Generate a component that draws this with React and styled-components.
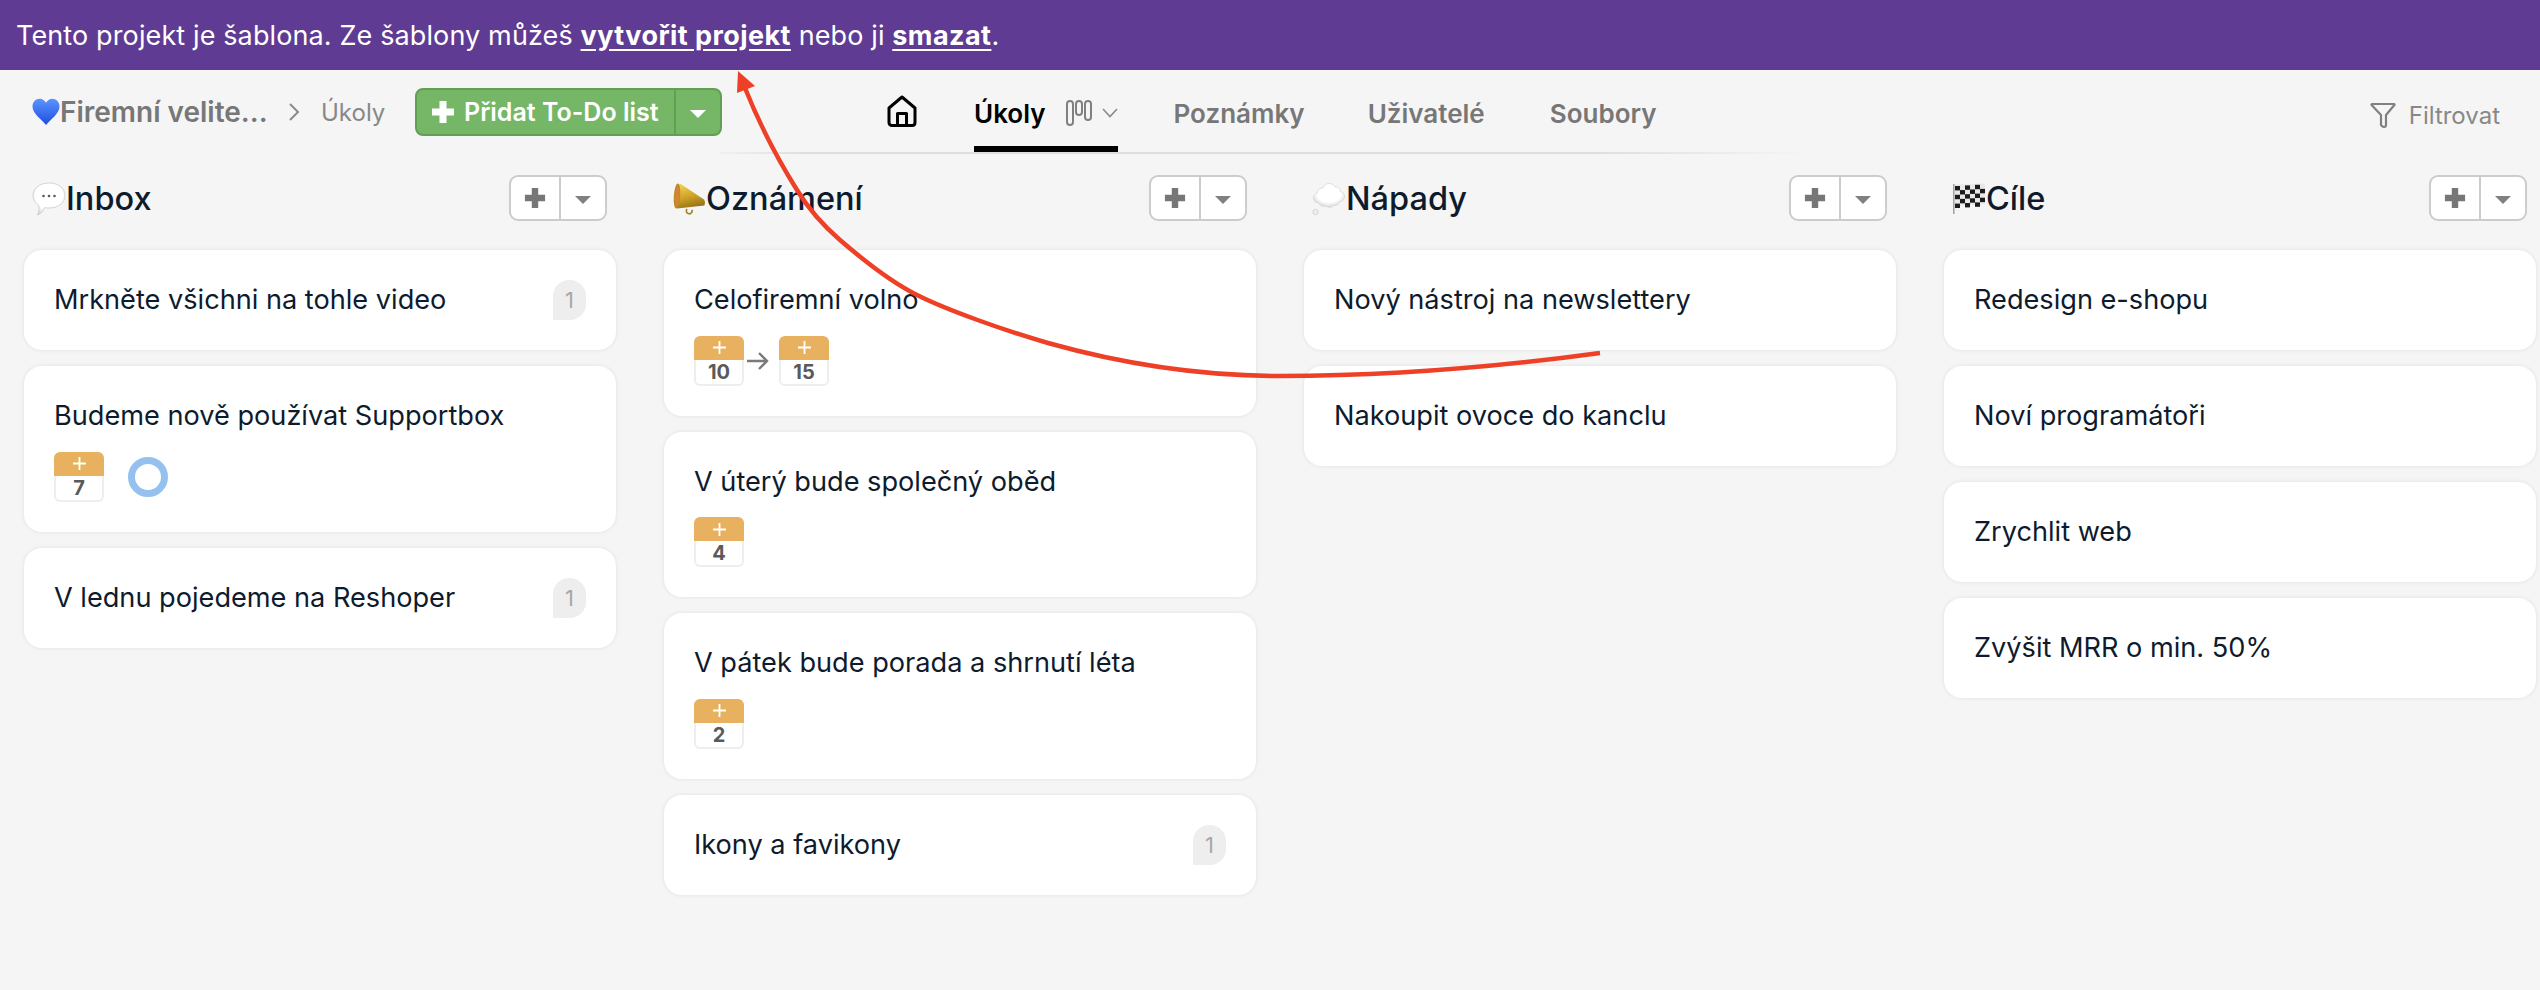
import React from "react";
import styled, { createGlobalStyle } from "styled-components";

const Global = createGlobalStyle`
  html, body {
    margin: 0;
    padding: 0;
    height: 100%;
    background: #f5f5f5;
    overflow: hidden;
  }
  body {
    font-family: "Inter", "Liberation Sans", sans-serif;
    color: #0e1b2d;
  }
`;

const Page = styled.div`
  position: relative;
  width: 2540px;
  height: 990px;
  overflow: hidden;
  background: #f5f5f5;
`;

const Banner = styled.div`
  height: 70px;
  display: flex;
  align-items: center;
  padding-left: 16px;
  background: #5f3b93;
  color: #ffffff;
  font-size: 27px;
  letter-spacing: 0.12px;
`;

const BannerLink = styled.a`
  font-weight: 700;
  color: #ffffff;
  letter-spacing: 0.44px;
  text-decoration: underline;
  text-underline-offset: 4px;
`;

const Header = styled.div`
  position: relative;
  height: 84px;
  display: flex;
  align-items: stretch;
  padding: 0 40px 0 32px;

  &::after {
    content: "";
    position: absolute;
    left: 720px;
    top: 82px;
    width: 1090px;
    height: 2px;
    background: linear-gradient(90deg, #f0f0f0 0, #dedede 8%, #dedede 80%, #f5f5f5 100%);
  }
`;

const Crumbs = styled.div`
  display: flex;
  align-items: center;
  height: 84px;
`;

const Project = styled.span`
  font-size: 28px;
  font-weight: 600;
  color: #777777;
  width: 205px;
  white-space: nowrap;
`;

const CrumbArrow = styled.svg`
  width: 14px;
  height: 20px;
  margin: 0 20px 0 22px;
  fill: none;
  stroke: #8a8a8a;
  stroke-width: 2;
`;

const CrumbPage = styled.span`
  font-size: 24px;
  color: #888888;
  width: 62px;
`;

const AddGroup = styled.div`
  display: flex;
  align-items: stretch;
  height: 48px;
  margin-left: 32px;
  background: #75b667;
  border: 2px solid #629f55;
  border-radius: 8px;
  box-sizing: border-box;
  color: #ffffff;
`;

const AddMain = styled.div`
  display: flex;
  align-items: center;
  gap: 9px;
  width: 259px;
  box-sizing: border-box;
  padding-left: 14px;
  border-right: 2px solid #629f55;
  font-size: 25px;
  font-weight: 600;
  white-space: nowrap;
`;

const AddCaret = styled.div`
  width: 44px;
  display: flex;
  align-items: center;
  justify-content: center;
`;

const Caret = styled.span`
  display: block;
  width: 0;
  height: 0;
  border-left: ${(p) => p.$size}px solid transparent;
  border-right: ${(p) => p.$size}px solid transparent;
  border-top: ${(p) => p.$size}px solid ${(p) => p.$color};
  margin-top: 3px;
`;

const Nav = styled.nav`
  display: flex;
  align-items: stretch;
  margin-left: 165px;
  height: 82px;
`;

const HomeLink = styled.div`
  display: flex;
  align-items: center;
  width: 87px;
`;

const Tab = styled.div`
  display: flex;
  align-items: center;
  box-sizing: border-box;
  height: 82px;
  padding-top: 10px;
  margin-right: ${(p) => p.$gap}px;
  font-size: 26px;
  font-weight: 600;
  color: ${(p) => (p.$active ? "#000000" : "#777777")};
  border-bottom: 6px solid ${(p) => (p.$active ? "#000000" : "transparent")};
`;

const TabIcons = styled.span`
  display: flex;
  align-items: center;
  gap: 10px;
  margin-left: 20px;
`;

const Filter = styled.div`
  margin-left: auto;
  display: flex;
  align-items: center;
  gap: 13px;
  height: 82px;
  padding-top: 8px;
  box-sizing: border-box;
  font-size: 24px;
  color: #888888;
`;

const Board = styled.div`
  display: grid;
  grid-template-columns: repeat(4, 592px);
  column-gap: 48px;
  padding: 21px 0 0 24px;
`;

const Column = styled.section`
  display: flex;
  flex-direction: column;
  gap: 16px;
`;

const ColumnHead = styled.div`
  display: flex;
  align-items: center;
  justify-content: space-between;
  height: 46px;
  margin-bottom: 13px;
  padding: 0 9px 0 8px;
`;

const ColumnTitle = styled.h2`
  display: flex;
  align-items: center;
  margin: 0;
  font-size: 32.5px;
  font-weight: 500;
  line-height: 46px;
  padding-top: 2px;
  color: #0e1b2d;
`;

const HeadButtons = styled.div`
  display: flex;
  align-items: stretch;
  height: 46px;
  background: #ffffff;
  border: 2px solid #cccccc;
  border-radius: 9px;
  box-sizing: border-box;
`;

const HeadPlus = styled.div`
  width: 48px;
  display: flex;
  align-items: center;
  justify-content: center;
  border-right: 2px solid #cccccc;
`;

const HeadCaret = styled.div`
  width: 44px;
  display: flex;
  align-items: center;
  justify-content: center;
`;

const Card = styled.article`
  position: relative;
  box-sizing: border-box;
  padding: 30px;
  background: #ffffff;
  border-radius: 18px;
  box-shadow: 0 0 4px rgba(0, 0, 0, 0.09);
`;

const CardTitle = styled.div`
  font-size: 27.15px;
  line-height: 40px;
  color: #0e1b2d;
  white-space: nowrap;
`;

const Comments = styled.span`
  position: absolute;
  right: 30px;
  top: 30px;
  width: 33px;
  height: 40px;
  display: flex;
  align-items: center;
  justify-content: center;
  background: #eeeeee;
  border-radius: 16px 16px 16px 0;
  font-size: 22px;
  color: #a8a8a8;
`;

const Meta = styled.div`
  display: flex;
  align-items: center;
  margin-top: 15.5px;
  height: 50px;
`;

const Cal = styled.div`
  width: 50px;
  height: 50px;
  display: flex;
  flex-direction: column;
  flex: none;
`;

const CalTop = styled.div`
  height: 24px;
  display: flex;
  align-items: center;
  justify-content: center;
  background: #e7b160;
  border-radius: 6px 6px 0 0;
`;

const CalNum = styled.div`
  flex: 1;
  display: flex;
  align-items: center;
  justify-content: center;
  background: #ffffff;
  border: 2px solid #eeeeee;
  border-top: 0;
  border-radius: 0 0 6px 6px;
  font-size: 20px;
  font-weight: 700;
  color: #5a5a5a;
`;

const CalArrow = styled.svg`
  width: 35px;
  height: 24px;
  flex: none;
  fill: none;
  stroke: #7a7a7a;
  stroke-width: 2.4;
`;

const Ring = styled.span`
  display: block;
  box-sizing: border-box;
  width: 40px;
  height: 40px;
  margin-left: 24px;
  border: 7px solid #95c1ef;
  border-radius: 50%;
`;

const Overlay = styled.svg`
  position: absolute;
  left: 0;
  top: 0;
  width: 2540px;
  height: 990px;
  pointer-events: none;
`;

const Heart = () => (
  <svg width="28" height="28" viewBox="0 0 28 28" style={{ flex: "none" }}>
    <defs>
      <linearGradient id="heartFill" x1="0" y1="0" x2="0" y2="1">
        <stop offset="0" stopColor="#5c93ff" />
        <stop offset="1" stopColor="#1d4fe0" />
      </linearGradient>
    </defs>
    <path
      d="M14 27C9 21 .5 15.500 .5 8.500 .5 3.800 4 .8 7.500 .8c3 0 5.300 1.700 6.500 4 1.200-2.300 3.500-4 6.500-4 3.500 0 7 3 7 7.700C27.500 15.500 19 21 14 27z"
      fill="url(#heartFill)"
    />
  </svg>
);

const SpeechEmoji = () => (
  <svg width="34" height="34" viewBox="0 0 34 34" style={{ flex: "none" }}>
    <defs>
      <radialGradient id="bubbleFill" cx="0.5" cy="0.4" r="0.7">
        <stop offset="0.6" stopColor="#ffffff" />
        <stop offset="1" stopColor="#c9c9c9" />
      </radialGradient>
    </defs>
    <path
      d="M17 1c9 0 16 5 16 12.500S26 26 17 26c-1.500 0-3-.1-4.300-.4C11.500 28.500 9 32 5.500 33c1.300-2.500 1.700-6 1.500-9.500C3 21 1 17.500 1 13.500 1 6 8 1 17 1z"
      fill="url(#bubbleFill)"
      stroke="#c4c4c4"
      strokeWidth="0.7"
    />
    <circle cx="11.500" cy="14" r="1.300" fill="#5a5a5a" />
    <circle cx="17" cy="14" r="1.300" fill="#5a5a5a" />
    <circle cx="22.500" cy="14" r="1.300" fill="#5a5a5a" />
  </svg>
);

const MegaphoneEmoji = () => (
  <svg width="34" height="34" viewBox="0 0 34 34" style={{ flex: "none" }}>
    <defs>
      <linearGradient id="hornFill" x1="0.2" y1="0" x2="0.5" y2="1">
        <stop offset="0" stopColor="#f4d35e" />
        <stop offset="0.55" stopColor="#cfa325" />
        <stop offset="1" stopColor="#96701a" />
      </linearGradient>
    </defs>
    <path
      d="M15 27c-1.500 2-.5 4.500 1.800 4.800 2.200.3 3.800-1.600 3.200-4"
      fill="none"
      stroke="#a67f1a"
      strokeWidth="1.600"
    />
    <path d="M8 1.500 32 17.500c1.200 1 1.200 4.500.3 6L5 26.500C2 22 3 6 8 1.500z" fill="url(#hornFill)" />
    <ellipse cx="5" cy="14" rx="3.200" ry="12.500" fill="#c08a22" transform="rotate(4 5 14)" />
    <ellipse cx="5" cy="14" rx="1.800" ry="10" fill="#d9803a" transform="rotate(4 5 14)" />
  </svg>
);

const CloudEmoji = () => (
  <svg width="34" height="34" viewBox="0 0 34 34" style={{ flex: "none" }}>
    <defs>
      <radialGradient id="cloudFill" cx="0.5" cy="0.4" r="0.65">
        <stop offset="0.6" stopColor="#ffffff" />
        <stop offset="1" stopColor="#cfcfcf" />
      </radialGradient>
    </defs>
    <path
      d="M17 1.500c3 0 5 1.500 6 3.500 3-.5 5.500 1.500 5.500 4.500 3 1 4.500 3.500 4 6-.5 2.500-2.500 4-5 4-.5 3-3 4.500-6 4-1.500 2-5 2.500-7.500.5-3 1-6 0-7-3-3 0-5.500-2-5.500-5 0-2.500 1.500-4.500 4-5 0-3 2.500-5.500 5.500-5C12 3 14.500 1.500 17 1.500z"
      fill="url(#cloudFill)"
      stroke="#cfcfcf"
      strokeWidth="0.6"
    />
    <circle cx="3.500" cy="30" r="2.700" fill="#eeeeee" stroke="#c4c4c4" strokeWidth="0.6" />
  </svg>
);

const flagCells = [];
for (let row = 0; row < 5; row++) {
  for (let col = 0; col < 6; col++) {
    if ((row + col) % 2 === 0) {
      flagCells.push({ x: 3 + col * 5, y: 4 + row * 4.4 - col * 0.3 });
    }
  }
}

const FlagEmoji = () => (
  <svg width="34" height="34" viewBox="0 0 34 34" style={{ flex: "none" }}>
    <path d="M3 2.500 33 1.500 V22 L3 24z" fill="#e8e8e8" />
    {flagCells.map((c) => (
      <rect key={`${c.x}-${c.y}`} x={c.x} y={c.y} width="5" height="4.400" fill="#1c1c1c" />
    ))}
    <path d="M1.800 2v30" stroke="#9a9a9a" strokeWidth="1.400" />
  </svg>
);

const BoldPlus = ({ size, color }) => (
  <svg width={size} height={size} viewBox="0 0 24 24" style={{ flex: "none" }}>
    <path d="M8.500 1h7v7.500H23v7h-7.500V23h-7v-7.500H1v-7h7.500z" fill={color} />
  </svg>
);

const ThinPlus = () => (
  <svg width="15" height="15" viewBox="0 0 15 15">
    <path d="M7.500 1v13M1 7.500h13" stroke="#ffffff" strokeWidth="1.800" />
  </svg>
);

const HomeIcon = () => (
  <svg width="30" height="32" viewBox="0 0 30 32" fill="none" stroke="#000000" strokeWidth="3" strokeLinejoin="round">
    <path d="M2 13 15 2l13 11v14.500c0 1.800-1.200 3-3 3H5c-1.800 0-3-1.200-3-3z" />
    <path d="M10.500 30V18.500h9V30" />
  </svg>
);

const KanbanIcon = () => (
  <svg width="26" height="26" viewBox="0 0 26 26" fill="none" stroke="#808080" strokeWidth="2">
    <rect x="1" y="1" width="6" height="24" rx="3" />
    <rect x="10" y="1" width="6" height="14" rx="3" />
    <rect x="19" y="1" width="6" height="19" rx="3" />
  </svg>
);

const SmallChevron = () => (
  <svg width="16" height="10" viewBox="0 0 16 10" fill="none" stroke="#8a8a8a" strokeWidth="1.600">
    <path d="M1 1l7 7.500L15 1" />
  </svg>
);

const FunnelIcon = () => (
  <svg width="26" height="26" viewBox="0 0 26 26" fill="none" stroke="#808080" strokeWidth="2.200" strokeLinejoin="round">
    <path d="M2 2h22c.5 0 .7.600.4 1L16 13v10.500c0 1.600-2.800 1.800-4 .5l-1-1V13L1.600 3C1.300 2.600 1.500 2 2 2z" />
  </svg>
);

const columns = [
  {
    title: "Inbox",
    icon: <SpeechEmoji />,
    cards: [
      { title: "Mrkněte všichni na tohle video", comments: 1 },
      { title: "Budeme nově používat Supportbox", dates: [7], ring: true },
      { title: "V lednu pojedeme na Reshoper", comments: 1 },
    ],
  },
  {
    title: "Oznámení",
    icon: <MegaphoneEmoji />,
    cards: [
      { title: "Celofiremní volno", dates: [10, 15] },
      { title: "V úterý bude společný oběd", dates: [4] },
      { title: "V pátek bude porada a shrnutí léta", dates: [2] },
      { title: "Ikony a favikony", comments: 1 },
    ],
  },
  {
    title: "Nápady",
    icon: <CloudEmoji />,
    cards: [{ title: "Nový nástroj na newslettery" }, { title: "Nakoupit ovoce do kanclu" }],
  },
  {
    title: "Cíle",
    icon: <FlagEmoji />,
    cards: [
      { title: "Redesign e-shopu" },
      { title: "Noví programátoři" },
      { title: "Zrychlit web" },
      { title: "Zvýšit MRR o min. 50%" },
    ],
  },
];

const DateBadge = ({ value }) => (
  <Cal>
    <CalTop>
      <ThinPlus />
    </CalTop>
    <CalNum>{value}</CalNum>
  </Cal>
);

const TaskCard = ({ card }) => (
  <Card>
    <CardTitle>{card.title}</CardTitle>
    {card.comments && <Comments>{card.comments}</Comments>}
    {card.dates && (
      <Meta>
        {card.dates.map((d, i) => (
          <React.Fragment key={d}>
            {i > 0 && (
              <CalArrow viewBox="0 0 35 24">
                <path d="M3 12h20M15 4l8 8-8 8" />
              </CalArrow>
            )}
            <DateBadge value={d} />
          </React.Fragment>
        ))}
        {card.ring && <Ring />}
      </Meta>
    )}
  </Card>
);

const App = () => {
  return (
    <Page>
      <Global />
      <Banner>
        <span>
          Tento projekt je šablona. Ze šablony můžeš <BannerLink>vytvořit projekt</BannerLink> nebo ji{" "}
          <BannerLink>smazat</BannerLink>.
        </span>
      </Banner>
      <Header>
        <Crumbs>
          <Heart />
          <Project>Firemní velite...</Project>
          <CrumbArrow viewBox="0 0 14 20">
            <path d="M3 2l8 8-8 8" />
          </CrumbArrow>
          <CrumbPage>Úkoly</CrumbPage>
          <AddGroup>
            <AddMain>
              <BoldPlus size={24} color="#ffffff" />
              Přidat To-Do list
            </AddMain>
            <AddCaret>
              <Caret $size={8} $color="#ffffff" />
            </AddCaret>
          </AddGroup>
        </Crumbs>
        <Nav>
          <HomeLink>
            <HomeIcon />
          </HomeLink>
          <Tab $active $gap={56}>
            Úkoly
            <TabIcons>
              <KanbanIcon />
              <SmallChevron />
            </TabIcons>
          </Tab>
          <Tab $gap={63}>Poznámky</Tab>
          <Tab $gap={65}>Uživatelé</Tab>
          <Tab $gap={0}>Soubory</Tab>
        </Nav>
        <Filter>
          <FunnelIcon />
          Filtrovat
        </Filter>
      </Header>
      <Board>
        {columns.map((column) => (
          <Column key={column.title}>
            <ColumnHead>
              <ColumnTitle>
                {column.icon}
                {column.title}
              </ColumnTitle>
              <HeadButtons>
                <HeadPlus>
                  <BoldPlus size={22} color="#777777" />
                </HeadPlus>
                <HeadCaret>
                  <Caret $size={8} $color="#808080" />
                </HeadCaret>
              </HeadButtons>
            </ColumnHead>
            {column.cards.map((card) => (
              <TaskCard key={card.title} card={card} />
            ))}
          </Column>
        ))}
      </Board>
      <Overlay viewBox="0 0 2540 990">
        <path
          d="M1600 353C1490 368 1385 376 1280 376 1185 376 1105 359 1048 343 1003 330 947 310 917 295 891 282 862 259 840 240 825 227 808 208 797 190 777 158 757 118 745 88"
          fill="none"
          stroke="#ee4027"
          strokeWidth="4.500"
        />
        <path d="M738 71 737 93 755 86z" fill="#ee4027" />
      </Overlay>
    </Page>
  );
};

export default App;
